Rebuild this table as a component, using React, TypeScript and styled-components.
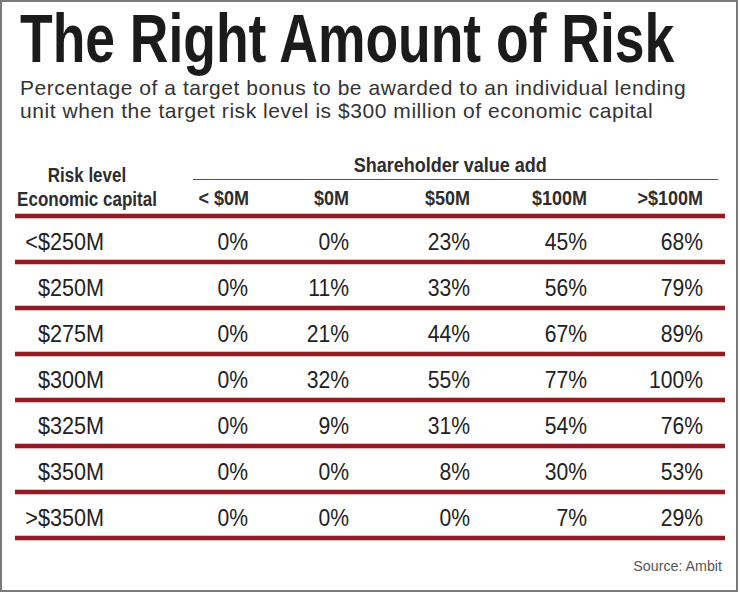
import styled, { createGlobalStyle } from 'styled-components'

const GlobalStyle = createGlobalStyle`
  html, body {
    margin: 0;
    padding: 0;
    background: #ffffff;
  }
`

// no condensed face is installed, so Liberation Sans is squeezed with scaleX
const SANS = `"Liberation Sans", Arial, sans-serif`

const columns = ['< $0M', '$0M', '$50M', '$100M', '>$100M']

const rows = [
  { label: '<$250M', values: ['0%', '0%', '23%', '45%', '68%'] },
  { label: '$250M', values: ['0%', '11%', '33%', '56%', '79%'] },
  { label: '$275M', values: ['0%', '21%', '44%', '67%', '89%'] },
  { label: '$300M', values: ['0%', '32%', '55%', '77%', '100%'] },
  { label: '$325M', values: ['0%', '9%', '31%', '54%', '76%'] },
  { label: '$350M', values: ['0%', '0%', '8%', '30%', '53%'] },
  { label: '>$350M', values: ['0%', '0%', '0%', '7%', '29%'] },
]

const App = () => {
  return (
    <>
      <GlobalStyle />
      <Frame>
        <Title>The Right Amount of Risk</Title>
        <Subtitle>
          Percentage of a target bonus to be awarded to an individual lending
          <br />
          unit when the target risk level is $300 million of economic capital
        </Subtitle>

        <Table>
          <HeaderRow>
            <RiskHead>
              Risk level
              <br />
              Economic capital
            </RiskHead>
            <ValueHead>
              <GroupTitle>
                <GroupText>Shareholder value add</GroupText>
              </GroupTitle>
              <ColumnLabels>
                {columns.map((c) => (
                  <ColumnLabel key={c}>{c}</ColumnLabel>
                ))}
              </ColumnLabels>
            </ValueHead>
          </HeaderRow>

          {rows.map((r) => (
            <Row key={r.label}>
              <RowLabel>{r.label}</RowLabel>
              {r.values.map((v, i) => (
                <Cell key={i}>{v}</Cell>
              ))}
            </Row>
          ))}
        </Table>

        <Source>Source: Ambit</Source>
      </Frame>
    </>
  )
}

const Frame = styled.div`
  box-sizing: border-box;
  width: 738px;
  height: 592px;
  border: 2px solid #7b7b7b;
  padding: 0 13px;
  background: #ffffff;
  overflow: hidden;
`

const Title = styled.h1`
  margin: 2px 0 0 5px;
  font-family: ${SANS};
  font-weight: 700;
  font-size: 68px;
  line-height: 68px;
  color: #1b1b1b;
  white-space: nowrap;
  transform: scaleX(0.786);
  transform-origin: left center;
`

const Subtitle = styled.p`
  margin: 4px 0 0 5px;
  font-family: ${SANS};
  font-size: 21px;
  line-height: 23px;
  letter-spacing: 0.55px;
  color: #333333;
  white-space: nowrap;
`

const Table = styled.div`
  margin-top: 33px;
  width: 710px;
`

const HeaderRow = styled.div`
  display: grid;
  grid-template-columns: 144px 1fr;
  column-gap: 34px;
  height: 63px;
  box-sizing: border-box;
  border-bottom: 4px solid #921c25;
  box-shadow: 0 1px 0 #e7b9bc, inset 0 -1px 0 #e7b9bc;
`

const RiskHead = styled.div`
  align-self: end;
  margin: 0 -12px 3px;
  text-align: center;
  font-family: ${SANS};
  font-weight: 700;
  font-size: 20px;
  line-height: 24px;
  color: #2d2d2d;
  white-space: nowrap;
  transform: scaleX(0.85);
`

const ValueHead = styled.div`
  margin-right: 7px;
  font-family: ${SANS};
  font-weight: 700;
  font-size: 20px;
  line-height: 20px;
  color: #2d2d2d;
`

const GroupTitle = styled.div`
  text-align: center;
  padding: 0 10px 4px 0;
  border-bottom: 1px solid #555555;
`

const GroupText = styled.span`
  display: inline-block;
  white-space: nowrap;
  transform: scaleX(0.9);
`

const ColumnLabels = styled.div`
  display: grid;
  grid-template-columns: 55px 101px 121px 117px 116px 1fr;
  margin-top: 8px;
`

const ColumnLabel = styled.div`
  text-align: right;
  white-space: nowrap;
  transform: scaleX(0.9);
  transform-origin: right center;
`

const Row = styled.div`
  display: grid;
  grid-template-columns: 89px 144px 101px 121px 117px 116px 1fr;
  height: 46px;
  box-sizing: border-box;
  padding-top: 5px;
  border-bottom: 4px solid #921c25;
  box-shadow: 0 1px 0 #e7b9bc, inset 0 -1px 0 #e7b9bc;
  font-family: ${SANS};
  font-size: 24px;
  line-height: 37px;
  color: #222222;
`

const RowLabel = styled.div`
  text-align: right;
  white-space: nowrap;
  transform: scaleX(0.9);
  transform-origin: right center;
`

const Cell = styled.div`
  text-align: right;
  white-space: nowrap;
  transform: scaleX(0.88);
  transform-origin: right center;
`

const Source = styled.div`
  margin: 18px 1px 0 0;
  text-align: right;
  font-family: ${SANS};
  font-size: 15px;
  line-height: 15px;
  color: #555555;
  transform: scaleX(0.95);
  transform-origin: right center;
`

export default App
